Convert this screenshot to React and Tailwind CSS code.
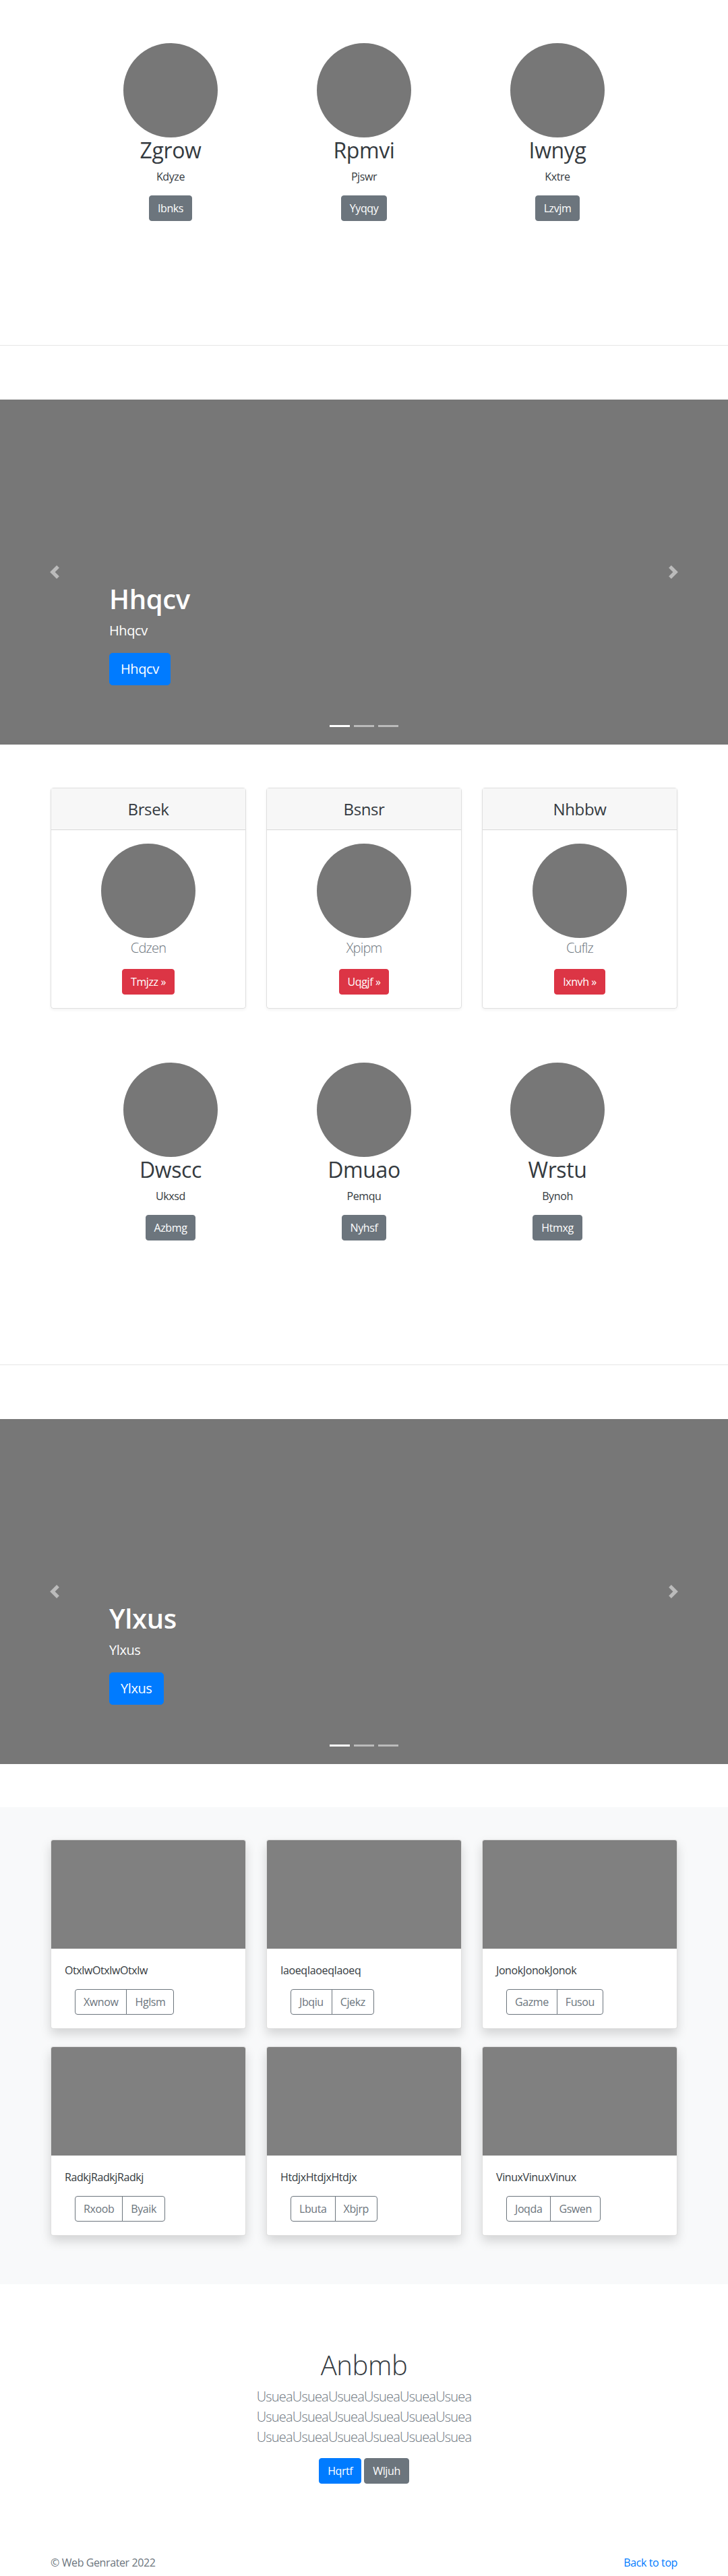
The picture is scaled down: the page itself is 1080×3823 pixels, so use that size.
import React from 'react';

const featuresTop = [
    { title: 'Zgrow', text: 'Kdyze', btn: 'Ibnks' },
    { title: 'Rpmvi', text: 'Pjswr', btn: 'Yyqqy' },
    { title: 'Iwnyg', text: 'Kxtre', btn: 'Lzvjm' },
];

const featuresBottom = [
    { title: 'Dwscc', text: 'Ukxsd', btn: 'Azbmg' },
    { title: 'Dmuao', text: 'Pemqu', btn: 'Nyhsf' },
    { title: 'Wrstu', text: 'Bynoh', btn: 'Htmxg' },
];

const pricing = [
    { title: 'Brsek', text: 'Cdzen', btn: 'Tmjzz »' },
    { title: 'Bsnsr', text: 'Xpipm', btn: 'Uqgjf »' },
    { title: 'Nhbbw', text: 'Cuflz', btn: 'Ixnvh »' },
];

const products = [
    { text: 'OtxlwOtxlwOtxlw', a: 'Xwnow', b: 'Hglsm' },
    { text: 'IaoeqIaoeqIaoeq', a: 'Jbqiu', b: 'Cjekz' },
    { text: 'JonokJonokJonok', a: 'Gazme', b: 'Fusou' },
    { text: 'RadkjRadkjRadkj', a: 'Rxoob', b: 'Byaik' },
    { text: 'HtdjxHtdjxHtdjx', a: 'Lbuta', b: 'Xbjrp' },
    { text: 'VinuxVinuxVinux', a: 'Joqda', b: 'Gswen' },
];

const btn = 'inline-block rounded-[4px] border px-3 py-1.5 text-base leading-6 text-white';

// row of round placeholders with title, text and a grey button
const Features = ({ items, className }) => (
    <section className={className}>
        <div className="mx-auto grid w-[861px] grid-cols-3 text-center">
            {items.map((item) => (
                <div key={item.title} className="flex flex-col items-center">
                    <div className="h-[140px] w-[140px] rounded-full bg-[#777]" />
                    <h2 className="mb-2 text-[32px] leading-[38px] text-[#343a40]">{item.title}</h2>
                    <p className="mb-4 leading-6 text-[#343a40]">{item.text}</p>
                    <button className={`${btn} border-[#6c757d] bg-[#6c757d]`}>{item.btn}</button>
                </div>
            ))}
        </div>
        <hr className="mt-[184px] border-0 border-t border-[rgba(0,0,0,0.1)]" />
    </section>
);

const Chevron = ({ dir }) => (
    <svg width="20" height="20" viewBox="0 0 8 8" fill="#fff" className="opacity-50">
        {dir === 'prev'
            ? <path d="M5.25 0l-4 4 4 4 1.5-1.5L4.25 4l2.5-2.5L5.25 0z" />
            : <path d="M2.75 0l-1.5 1.5L3.75 4l-2.5 2.5L2.75 8l4-4-4-4z" />}
    </svg>
);

const Carousel = ({ label }) => (
    <div className="relative mt-20 h-[512px] bg-[#777]">
        <div className="absolute inset-y-0 left-0 flex w-[15%] items-center justify-center">
            <Chevron dir="prev" />
        </div>
        <div className="absolute inset-y-0 right-0 flex w-[15%] items-center justify-center">
            <Chevron dir="next" />
        </div>
        <div className="absolute bottom-[88px] left-[15%] text-white">
            <h1 className="mb-2 text-[40px] font-semibold leading-[48px]">{label}</h1>
            <p className="mb-[18px] text-[20px] leading-[30px]">{label}</p>
            <button className="rounded-[5px] border border-[#007bff] bg-[#007bff] px-4 py-2 text-[20px] leading-[30px]">
                {label}
            </button>
        </div>
        <div className="absolute bottom-[26px] left-1/2 flex -translate-x-1/2 gap-[6px]">
            <span className="h-[3px] w-[30px] bg-white" />
            <span className="h-[3px] w-[30px] bg-white/50" />
            <span className="h-[3px] w-[30px] bg-white/50" />
        </div>
    </div>
);

const App = () => {
    return (
        <div className="bg-white font-['Open_Sans',sans-serif] tracking-tight text-[#212529]">
            <Features items={featuresTop} className="pt-16" />

            <Carousel label="Hhqcv" />

            {/* pricing style cards */}
            <section className="mx-auto mt-16 grid w-[930px] grid-cols-3 gap-[30px] text-center">
                {pricing.map((card) => (
                    <div key={card.title} className="rounded-[4px] border border-[rgba(0,0,0,0.125)] shadow-[0_2px_4px_rgba(0,0,0,0.05)]">
                        <div className="border-b border-[rgba(0,0,0,0.125)] bg-[#f7f7f7] py-4">
                            <h4 className="text-[24px] font-medium leading-[29px] text-[#343a40]">{card.title}</h4>
                        </div>
                        <div className="flex flex-col items-center p-5">
                            <div className="h-[140px] w-[140px] rounded-full bg-[#777]" />
                            <p className="mb-4 text-[20px] font-light leading-[30px] tracking-[-0.04em] text-[#6c757d]">{card.text}</p>
                            <button className={`${btn} border-[#dc3545] bg-[#dc3545]`}>{card.btn}</button>
                        </div>
                    </div>
                ))}
            </section>

            <Features items={featuresBottom} className="pt-20" />

            <Carousel label="Ylxus" />

            {/* album */}
            <section className="mt-16 bg-[#f8f9fa] pb-[72px] pt-12">
                <div className="mx-auto grid w-[930px] grid-cols-3 gap-x-[30px] gap-y-[26px]">
                    {products.map((p) => (
                        <div key={p.text} className="overflow-hidden rounded-[4px] border border-[rgba(0,0,0,0.125)] bg-white shadow-[0_8px_16px_rgba(0,0,0,0.15)]">
                            <div className="h-[161px] bg-[#808080]" />
                            <div className="p-5">
                                <p className="mb-4 leading-6 text-[#343a40]">{p.text}</p>
                                <div className="ml-[15px] inline-flex">
                                    <button className="rounded-l-[4px] border border-[#6c757d] px-3 py-1.5 leading-6 text-[#6c757d]">{p.a}</button>
                                    <button className="-ml-px rounded-r-[4px] border border-[#6c757d] px-3 py-1.5 leading-6 text-[#6c757d]">{p.b}</button>
                                </div>
                            </div>
                        </div>
                    ))}
                </div>
            </section>

            {/* hero */}
            <section className="pb-[57px] pt-24 text-center">
                <h1 className="mb-2 text-[40px] font-light leading-[48px] text-[#343a40]">Anbmb</h1>
                <p className="mb-4 text-[20px] font-light leading-[30px] tracking-[-0.04em] text-[#6c757d]">
                    UsueaUsueaUsueaUsueaUsueaUsuea<br />
                    UsueaUsueaUsueaUsueaUsueaUsuea<br />
                    UsueaUsueaUsueaUsueaUsueaUsuea
                </p>
                <div className="mt-2 flex justify-center gap-1">
                    <button className={`${btn} border-[#007bff] bg-[#007bff]`}>Hqrtf</button>
                    <button className={`${btn} border-[#6c757d] bg-[#6c757d]`}>Wljuh</button>
                </div>
            </section>

            <footer className="mx-auto flex w-[930px] justify-between pt-12 leading-6">
                <p className="text-[#6c757d]">© Web Genrater 2022</p>
                <a href="#" className="text-[#007bff]">Back to top</a>
            </footer>
        </div>
    );
};

export default App;
